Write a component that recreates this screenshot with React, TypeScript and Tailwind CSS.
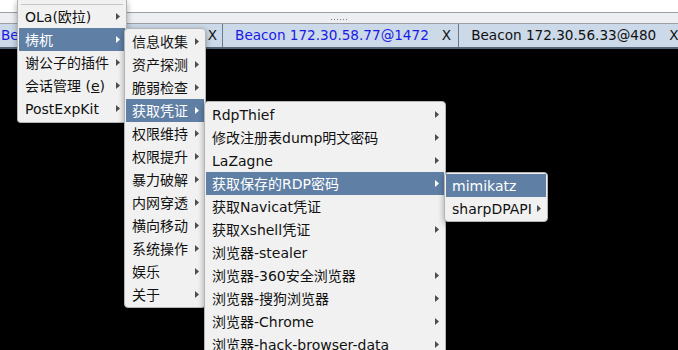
import React from "react"

type Item = { label: React.ReactNode; sub?: boolean; active?: boolean }

const font = { fontFamily: '"DejaVu Sans", "Noto Sans CJK SC", sans-serif' }

function Arrow({ active }: { active?: boolean }) {
  return (
    <svg width="4" height="7" viewBox="0 0 4 7" className="shrink-0">
      <path d="M0 0 L4 3.5 L0 7 Z" fill={active ? "#ffffff" : "#4d4d4d"} />
    </svg>
  )
}

function MenuRow({ item }: { item: Item }) {
  return (
    <div
      className={
        "mx-px h-[23px] flex items-center justify-between pl-[6px] pr-[5px] text-[14px] leading-none " +
        (item.active ? "bg-[#5f7fa5] text-white" : "text-[#111111]")
      }
    >
      <span className="whitespace-nowrap">{item.label}</span>
      {item.sub && <Arrow active={item.active} />}
    </div>
  )
}

function Menu({ items, className, head }: { items: Item[]; className: string; head?: React.ReactNode }) {
  return (
    <div
      className={
        "absolute bg-[#f1f1f1] border border-[#b4b4b4] rounded-[4px] shadow-[0_2px_6px_rgba(0,0,0,0.35)] " +
        className
      }
      style={font}
    >
      {head}
      {items.map((it, i) => (
        <MenuRow key={i} item={it} />
      ))}
    </div>
  )
}

function Tab({ text, blue, className = "" }: { text: string; blue?: boolean; className?: string }) {
  return (
    <div
      className={
        "h-full flex items-center pl-[12px] border-r border-[#6a7a8e] shrink-0 text-[13.6px] " + className
      }
    >
      <span className={"whitespace-nowrap " + (blue ? "text-[#1a1ae6]" : "text-[#111111]")}>{text}</span>
      <span className="ml-[13px] text-[#111111]">X</span>
    </div>
  )
}

const menu1: Item[] = [
  { label: "OLa(欧拉)", sub: true },
  { label: "梼杌", sub: true, active: true },
  { label: "谢公子的插件", sub: true },
  {
    label: (
      <>
        会话管理 (<span className="underline">e</span>)
      </>
    ),
    sub: true,
  },
  { label: "PostExpKit", sub: true },
]

const menu2: Item[] = [
  "信息收集",
  "资产探测",
  "脆弱检查",
  "获取凭证",
  "权限维持",
  "权限提升",
  "暴力破解",
  "内网穿透",
  "横向移动",
  "系统操作",
  "娱乐",
  "关于",
].map((l) => ({ label: l, sub: true, active: l === "获取凭证" }))

const menu3: Item[] = [
  { label: "RdpThief", sub: true },
  { label: "修改注册表dump明文密码", sub: true },
  { label: "LaZagne", sub: true },
  { label: "获取保存的RDP密码", sub: true, active: true },
  { label: "获取Navicat凭证" },
  { label: "获取Xshell凭证", sub: true },
  { label: "浏览器-stealer" },
  { label: "浏览器-360安全浏览器", sub: true },
  { label: "浏览器-搜狗浏览器", sub: true },
  { label: "浏览器-Chrome", sub: true },
  { label: "浏览器-hack-browser-data", sub: true },
]

const menu4: Item[] = [
  { label: "mimikatz", active: true },
  { label: "sharpDPAPI", sub: true },
]

export default function App() {
  return (
    <div className="relative w-[678px] h-[350px] overflow-hidden bg-black flex flex-col" style={font}>
      <div className="h-[12px] bg-white" />
      <div className="h-[12px] bg-[#eceef2] border-y border-[#9aa0a8] flex items-end justify-center pb-[3px]">
        <div className="flex gap-[2px]">
          {[0, 1, 2, 3, 4, 5].map((i) => (
            <div key={i} className="w-px h-px bg-[#7a7a7a]" />
          ))}
        </div>
      </div>
      <div className="h-[25px] bg-[#cbd9e8] border-b-2 border-[#55657a] flex overflow-hidden">
        <Tab text="Beacon 172.30.58.33@4286" blue className="-ml-[11px] pr-[5px]" />
        <Tab text="Beacon 172.30.58.77@1472" blue className="pr-[7px]" />
        <Tab text="Beacon 172.30.56.33@480" className="pr-[4px]" />
      </div>
      <div className="flex-1 bg-black" />

      <Menu
        items={menu1}
        className="left-[17px] top-0 w-[110px] border-t-0 rounded-t-none pb-[2px]"
        head={<div className="h-[5px] mx-[3px] border-b border-[#c4c4c4]" />}
      />
      <Menu items={menu2} className="left-[124px] top-[28px] w-[82px] py-px" />
      <Menu items={menu3} className="left-[204px] top-[101px] w-[242px] py-px" />
      <Menu items={menu4} className="left-[444px] top-[172px] w-[104px] py-px" />
    </div>
  )
}
